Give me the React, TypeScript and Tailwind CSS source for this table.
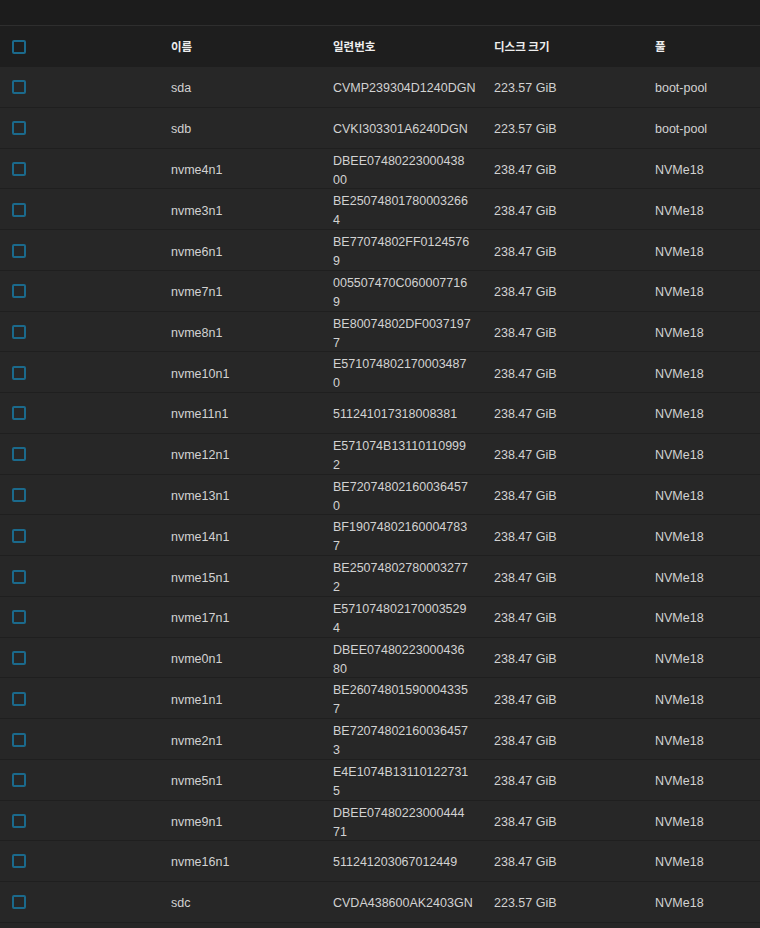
// 일련번호는 참조 화면과 같은 위치에서 줄바꿈되도록 두 줄로 나눠 둔다
const rows: [string, string[], string, string][] = [
  ['sda', ['CVMP239304D1240DGN'], '223.57 GiB', 'boot-pool'],
  ['sdb', ['CVKI303301A6240DGN'], '223.57 GiB', 'boot-pool'],
  ['nvme4n1', ['DBEE07480223000438', '00'], '238.47 GiB', 'NVMe18'],
  ['nvme3n1', ['BE25074801780003266', '4'], '238.47 GiB', 'NVMe18'],
  ['nvme6n1', ['BE77074802FF0124576', '9'], '238.47 GiB', 'NVMe18'],
  ['nvme7n1', ['005507470C060007716', '9'], '238.47 GiB', 'NVMe18'],
  ['nvme8n1', ['BE80074802DF0037197', '7'], '238.47 GiB', 'NVMe18'],
  ['nvme10n1', ['E571074802170003487', '0'], '238.47 GiB', 'NVMe18'],
  ['nvme11n1', ['511241017318008381'], '238.47 GiB', 'NVMe18'],
  ['nvme12n1', ['E571074B13110110999', '2'], '238.47 GiB', 'NVMe18'],
  ['nvme13n1', ['BE72074802160036457', '0'], '238.47 GiB', 'NVMe18'],
  ['nvme14n1', ['BF19074802160004783', '7'], '238.47 GiB', 'NVMe18'],
  ['nvme15n1', ['BE25074802780003277', '2'], '238.47 GiB', 'NVMe18'],
  ['nvme17n1', ['E571074802170003529', '4'], '238.47 GiB', 'NVMe18'],
  ['nvme0n1', ['DBEE07480223000436', '80'], '238.47 GiB', 'NVMe18'],
  ['nvme1n1', ['BE26074801590004335', '7'], '238.47 GiB', 'NVMe18'],
  ['nvme2n1', ['BE72074802160036457', '3'], '238.47 GiB', 'NVMe18'],
  ['nvme5n1', ['E4E1074B13110122731', '5'], '238.47 GiB', 'NVMe18'],
  ['nvme9n1', ['DBEE07480223000444', '71'], '238.47 GiB', 'NVMe18'],
  ['nvme16n1', ['511241203067012449'], '238.47 GiB', 'NVMe18'],
  ['sdc', ['CVDA438600AK2403GN'], '223.57 GiB', 'NVMe18'],
]

// 행 공통 그리드 — 체크박스 / 이름 / 일련번호 / 디스크 크기 / 풀
const grid = 'grid grid-cols-[171px_162px_161px_161px_1fr] items-center'

function Checkbox() {
  return (
    <span className="ml-3 block h-[14px] w-[14px] rounded-[2px] border-2 border-[#1b6a8c]" />
  )
}

export default function App() {
  return (
    <div
      className="min-h-[928px] w-[760px] bg-[#262626] text-[12.5px] text-[#d2d2d2]"
      style={{ fontFamily: '"Liberation Sans", "Noto Sans CJK KR", sans-serif' }}
    >
      {/* 상단 툴바 영역 */}
      <div className="h-[26px] border-b border-[#2e2e2e] bg-[#1c1c1c]" />

      {/* 헤더 */}
      <div
        className={`${grid} h-[41px] bg-[#1e1e1e] text-[11.5px] font-bold text-[#ededed]`}
        style={{ fontFamily: '"Noto Sans CJK KR", sans-serif' }}
      >
        <Checkbox />
        <span>이름</span>
        <span>일련번호</span>
        <span>디스크 크기</span>
        <span>풀</span>
      </div>

      {rows.map(([name, serial, size, pool]) => (
        <div
          key={name}
          className={`${grid} h-[40.75px] border-b border-[#1f1f1f] bg-[#272727]`}
        >
          <Checkbox />
          <span className="pt-[3px]">{name}</span>
          <span className="flex flex-col whitespace-nowrap pt-[3px] leading-[19px]">
            {serial.map((line) => (
              <span key={line}>{line}</span>
            ))}
          </span>
          <span className="pt-[3px]">{size}</span>
          <span className="pt-[3px]">{pool}</span>
        </div>
      ))}
    </div>
  )
}
